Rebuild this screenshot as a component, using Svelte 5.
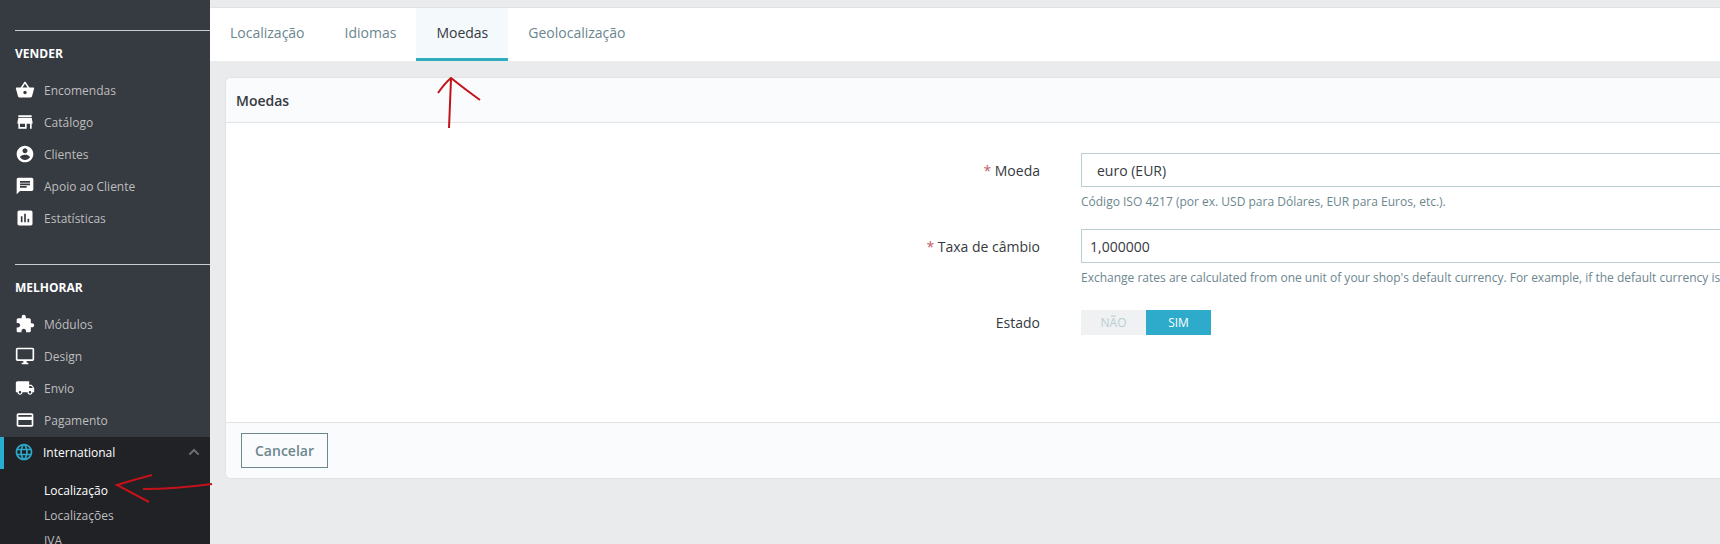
<script>
  const sections = [
    { title: 'VENDER', items: [
      { label: 'Encomendas', d: 'M17.21 9l-4.38-6.56c-.19-.28-.51-.42-.83-.42-.32 0-.64.14-.83.43L6.79 9H2c-.55 0-1 .45-1 1 0 .09.01.18.04.27l2.54 9.27c.23.84 1 1.46 1.92 1.46h13c.92 0 1.69-.62 1.93-1.46l2.54-9.27L23 10c0-.55-.45-1-1-1h-4.79zM9 9l3-4.4L15 9H9zm3 8c-1.1 0-2-.9-2-2s.9-2 2-2 2 .9 2 2-.9 2-2 2z' },
      { label: 'Catálogo', d: 'M20 4H4v2h16V4zm1 10v-2l-1-5H4l-1 5v2h1v6h10v-6h4v6h2v-6h1zm-9 4H6v-4h6v4z' },
      { label: 'Clientes', d: 'M12 2C6.48 2 2 6.48 2 12s4.48 10 10 10 10-4.48 10-10S17.52 2 12 2zm0 3c1.66 0 3 1.34 3 3s-1.34 3-3 3-3-1.34-3-3 1.34-3 3-3zm0 14.2c-2.5 0-4.71-1.28-6-3.22.03-1.99 4-3.08 6-3.08 1.99 0 5.97 1.09 6 3.08-1.29 1.94-3.5 3.22-6 3.22z' },
      { label: 'Apoio ao Cliente', d: 'M20 2H4c-1.1 0-1.99.9-1.99 2L2 22l4-4h14c1.1 0 2-.9 2-2V4c0-1.1-.9-2-2-2zM6 9h12v2H6V9zm8 5H6v-2h8v2zm4-6H6V6h12v2z' },
      { label: 'Estatísticas', d: 'M19 3H5c-1.1 0-2 .9-2 2v14c0 1.1.9 2 2 2h14c1.1 0 2-.9 2-2V5c0-1.1-.9-2-2-2zM9 17H7v-7h2v7zm4 0h-2V7h2v10zm4 0h-2v-4h2v4z' }
    ] },
    { title: 'MELHORAR', items: [
      { label: 'Módulos', d: 'M20.5 11H19V7c0-1.1-.9-2-2-2h-4V3.5C13 2.12 11.88 1 10.5 1S8 2.12 8 3.5V5H4c-1.1 0-1.99.9-1.99 2v3.8H3.5c1.49 0 2.7 1.21 2.7 2.7s-1.21 2.7-2.7 2.7H2V20c0 1.1.9 2 2 2h3.8v-1.5c0-1.49 1.21-2.7 2.7-2.7 1.49 0 2.7 1.21 2.7 2.7V22H17c1.1 0 2-.9 2-2v-4h1.5c1.38 0 2.5-1.12 2.5-2.5S21.88 11 20.5 11z' },
      { label: 'Design', d: 'M21 2H3c-1.1 0-2 .9-2 2v12c0 1.1.9 2 2 2h7v2H8v2h8v-2h-2v-2h7c1.1 0 2-.9 2-2V4c0-1.1-.9-2-2-2zm0 14H3V4h18v12z' },
      { label: 'Envio', d: 'M20 8h-3V4H3c-1.1 0-2 .9-2 2v11h2c0 1.66 1.34 3 3 3s3-1.34 3-3h6c0 1.66 1.34 3 3 3s3-1.34 3-3h2v-5l-3-4zM6 18.5c-.83 0-1.5-.67-1.5-1.5s.67-1.5 1.5-1.5 1.5.67 1.5 1.5-.67 1.5-1.5 1.5zm13.5-9l1.96 2.5H17V9.5h2.5zm-1.5 9c-.83 0-1.5-.67-1.5-1.5s.67-1.5 1.5-1.5 1.5.67 1.5 1.5-.67 1.5-1.5 1.5z' },
      { label: 'Pagamento', d: 'M20 4H4c-1.11 0-1.99.89-1.99 2L2 18c0 1.11.89 2 2 2h16c1.11 0 2-.89 2-2V6c0-1.11-.89-2-2-2zm0 14H4v-6h16v6zm0-10H4V6h16v2z' }
    ] }
  ];
  const globe = 'M11.99 2C6.47 2 2 6.48 2 12s4.47 10 9.99 10C17.52 22 22 17.52 22 12S17.52 2 11.99 2zm6.93 6h-2.95c-.32-1.25-.78-2.45-1.38-3.56 1.84.63 3.37 1.91 4.33 3.56zM12 4.04c.83 1.2 1.48 2.53 1.91 3.96h-3.82c.43-1.43 1.08-2.76 1.91-3.96zM4.26 14C4.1 13.36 4 12.69 4 12s.1-1.36.26-2h3.38c-.08.66-.14 1.32-.14 2 0 .68.06 1.34.14 2H4.26zm.82 2h2.95c.32 1.25.78 2.45 1.38 3.56-1.84-.63-3.37-1.9-4.33-3.56zm2.95-8H5.08c.96-1.66 2.49-2.93 4.33-3.56C8.81 5.55 8.35 6.75 8.03 8zM12 19.96c-.83-1.2-1.48-2.53-1.91-3.96h3.82c-.43 1.43-1.08 2.76-1.91 3.96zM14.34 14H9.66c-.09-.66-.16-1.32-.16-2 0-.68.07-1.35.16-2h4.68c.09.65.16 1.32.16 2 0 .68-.07 1.34-.16 2zm.25 5.56c.6-1.11 1.06-2.31 1.38-3.56h2.95c-.96 1.65-2.49 2.93-4.33 3.56zM16.36 14c.08-.66.14-1.32.14-2 0-.68-.06-1.34-.14-2h3.38c.16.64.26 1.31.26 2s-.1 1.36-.26 2h-3.38z';
  const tabs = ['Localização', 'Idiomas', 'Moedas', 'Geolocalização'];
  const subs = ['Localização', 'Localizações', 'IVA'];
</script>

<div class="page">
  <aside class="sidebar">
    {#each sections as section}
      <div class="section">
        <div class="rule"></div>
        <h4>{section.title}</h4>
        {#each section.items as item}
          <div class="item">
            <svg viewBox="0 0 24 24"><path d={item.d} /></svg>
            <span>{item.label}</span>
          </div>
        {/each}
      </div>
    {/each}
    <div class="open-group">
      <div class="item active">
        <svg viewBox="0 0 24 24"><path d={globe} /></svg>
        <span>International</span>
        <svg class="chev" viewBox="0 0 24 24"><path d="M5 16l7-7 7 7" /></svg>
      </div>
      {#each subs as sub, i}
        <div class="sub" class:current={i === 0}>{sub}</div>
      {/each}
    </div>
  </aside>

  <main class="main">
    <nav class="tabs">
      {#each tabs as tab}
        <div class="tab" class:active={tab === 'Moedas'}>{tab}</div>
      {/each}
    </nav>

    <div class="content">
      <section class="card">
        <header class="card-head">Moedas</header>
        <div class="form">
          <div class="label"><em>*</em> Moeda</div>
          <div class="field">
            <div class="input indented">euro (EUR)</div>
            <p class="help">Código ISO 4217 (por ex. USD para Dólares, EUR para Euros, etc.).</p>
          </div>
          <div class="label"><em>*</em> Taxa de câmbio</div>
          <div class="field">
            <div class="input">1,000000</div>
            <p class="help">Exchange rates are calculated from one unit of your shop's default currency. For example, if the default currency is</p>
          </div>
          <div class="label state">Estado</div>
          <div class="switch">
            <span>NÃO</span>
            <span class="on">SIM</span>
          </div>
        </div>
        <footer class="card-foot">
          <button class="cancel">Cancelar</button>
        </footer>
      </section>
    </div>
  </main>

  <svg class="ink" viewBox="0 0 1720 544" aria-hidden="true">
    <path d="M449 128 Q450 104 451 79 M438 93 Q445 83 451 78 Q466 90 480 100" />
    <path d="M152 475 Q133 480 117 485 Q134 494 149 502 M143 489 Q175 489 212 484" />
  </svg>
</div>

<style>
  :global(body) {
    margin: 0;
    background: #e9ebec;
  }

  .page {
    position: relative;
    display: flex;
    width: 1720px;
    height: 544px;
    overflow: hidden;
    font-family: "Open Sans", "Liberation Sans", sans-serif;
  }

  .sidebar {
    flex: none;
    width: 210px;
    padding-top: 30px;
    box-sizing: border-box;
    background: #363a41;
    display: flex;
    flex-direction: column;
  }

  .section {
    padding-bottom: 30px;
  }
  .section + .section {
    padding-bottom: 1px;
  }

  .rule {
    height: 1px;
    margin-left: 15px;
    background: #c9cdd0;
  }

  h4 {
    margin: 0;
    padding: 15px 0 12px 15px;
    font-size: 12px;
    line-height: 16px;
    font-weight: 700;
    color: #fff;
  }

  .item {
    display: flex;
    align-items: center;
    height: 32px;
    padding-left: 15px;
    font-size: 12px;
    color: #bebebe;
  }
  .item svg {
    flex: none;
    width: 20px;
    height: 20px;
    margin-right: 9px;
    fill: #fff;
  }

  .open-group {
    flex: 1;
    background: #202226;
  }

  .item.active {
    color: #fff;
    height: 30px;
    padding: 0 0 2px 10px;
    border-left: 4px solid #27aed0;
  }
  .item.active svg {
    fill: #2eaacb;
  }
  .item.active .chev {
    width: 16px;
    height: 16px;
    margin: 0 8px 0 auto;
    fill: none;
    stroke: #6c7075;
    stroke-width: 3;
  }

  .sub {
    padding-left: 44px;
    font-size: 12px;
    line-height: 25px;
    color: #bebebe;
  }
  .sub.current {
    margin-top: 9px;
    color: #fff;
  }

  .main {
    flex: none;
    width: 1510px;
    display: flex;
    flex-direction: column;
  }

  .tabs {
    display: flex;
    height: 54px;
    margin-top: 7px;
    box-sizing: border-box;
    background: #fff;
    border-top: 1px solid #dfe3e5;
  }

  .tab {
    padding: 0 20px;
    font-size: 14px;
    line-height: 50px;
    color: #6c868e;
  }
  .tab.active {
    color: #363a41;
    background: #f4f9fb;
    border-bottom: 3px solid #31acbf;
  }

  .content {
    padding: 17px 0 0 16px;
  }

  .card {
    width: 1600px;
    height: 400px;
    display: flex;
    flex-direction: column;
    box-sizing: border-box;
    background: #fff;
    border-radius: 5px;
    box-shadow: 0 0 2px 0 rgba(0, 0, 0, .12);
  }

  .card-head {
    flex: none;
    height: 45px;
    box-sizing: border-box;
    padding-left: 10px;
    background: #fafbfc;
    border-bottom: 1px solid #dfe3e5;
    border-radius: 5px 5px 0 0;
    font-size: 14px;
    line-height: 45px;
    font-weight: 600;
    color: #363a41;
  }

  .form {
    flex: 1;
    display: grid;
    grid-template-columns: 814px 1fr;
    grid-auto-rows: min-content;
    column-gap: 41px;
    padding-top: 30px;
  }

  .label {
    text-align: right;
    font-size: 14px;
    line-height: 36px;
    color: #363a41;
  }
  .label em {
    font-style: normal;
    color: #c05c67;
  }

  .field {
    height: 76px;
  }

  .input {
    height: 34px;
    box-sizing: border-box;
    padding: 0 8px;
    border: 1px solid #bbcdd2;
    background: #fff;
    font-size: 14px;
    line-height: 33px;
    color: #363a41;
  }
  .input.indented {
    padding-left: 15px;
  }

  .help {
    margin: 6px 0 0;
    font-size: 12px;
    line-height: 18px;
    white-space: nowrap;
    color: #6c868e;
  }

  .label.state {
    line-height: 26px;
    margin-top: 5px;
  }

  .switch {
    display: flex;
    width: 130px;
    height: 25px;
    margin-top: 5px;
    font-size: 12px;
    line-height: 25px;
    text-align: center;
    background: #eff1f2;
    color: #bbcdd2;
  }
  .switch span {
    flex: 1;
  }
  .switch .on {
    background: #2eaacb;
    color: #fff;
  }

  .card-foot {
    flex: none;
    height: 56px;
    box-sizing: border-box;
    padding: 10px 15px;
    background: #fafbfc;
    border-top: 1px solid #dfe3e5;
    border-radius: 0 0 5px 5px;
  }

  .cancel {
    width: 87px;
    height: 35px;
    padding: 0;
    background: transparent;
    border: 1px solid #6c868e;
    font-family: inherit;
    font-size: 14px;
    font-weight: 600;
    color: #6c868e;
  }

  .ink {
    position: absolute;
    inset: 0;
    width: 1720px;
    height: 544px;
    pointer-events: none;
    fill: none;
    stroke: #c4121a;
    stroke-width: 2;
  }
</style>
